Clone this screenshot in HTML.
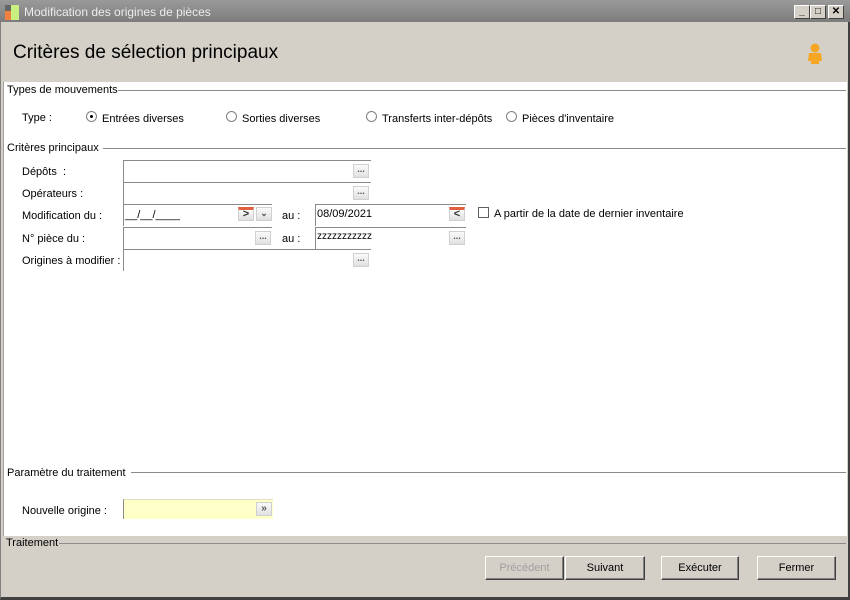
<!DOCTYPE html>
<html><head><meta charset="utf-8"><style>
*{margin:0;padding:0;box-sizing:border-box}
body{width:850px;height:600px;overflow:hidden;background:#d4d0c8;font-family:"Liberation Sans",Tahoma,sans-serif;font-size:11px;color:#000;position:relative}
.a{position:absolute}
#win{position:absolute;left:0;top:0;width:850px;height:600px;border-left:1px solid #808080;border-right:2px solid #404040;border-bottom:3px solid #404040}
#title{left:0;top:0;width:850px;height:22px;background:linear-gradient(#9a9a9a,#7c7c7c);color:#ececec;font-size:12px;line-height:24px;padding-left:24px}
.tb{top:5px;width:16px;height:14px;background:#d4d0c8;border:1px solid;border-color:#fff #404040 #404040 #fff;font-size:10px;line-height:12px;text-align:center;font-weight:bold}
#white{left:3px;top:82px;width:844px;height:454px;background:#fff;border-left:1px solid #a0a0a0}
.leg{white-space:nowrap}
.line{height:1px;background:#8c8c8c}
.fld{background:#fff;border-top:1px solid #8a8a8a;border-left:1px solid #8a8a8a;height:22px}
.dots{width:16px;height:14px;border:1px solid #d0d0d0;background:linear-gradient(#fafafa,#e0e0e0);font-size:9px;line-height:8px;text-align:center;color:#555;font-weight:bold}
.rad{width:11px;height:11px;border-radius:50%;border:1px solid #808080;background:#fff}
.btn{top:556px;height:24px;background:#d4d0c8;border:1px solid;border-color:#fff #404040 #404040 #fff;box-shadow:inset -1px -1px #808080;text-align:center;line-height:22px;font-size:11px}
</style></head><body>
<div id="win"></div>
<div class="a" id="title">Modification des origines de pièces</div>
<div class="a" style="left:5px;top:5px;width:6px;height:6px;background:#666"></div>
<div class="a" style="left:5px;top:11px;width:6px;height:9px;background:#f08040"></div>
<div class="a" style="left:11px;top:5px;width:8px;height:15px;background:#c8f080"></div>
<div class="a tb" style="left:794px">_</div>
<div class="a tb" style="left:810px">□</div>
<div class="a tb" style="left:828px">✕</div>
<div class="a" style="left:13px;top:42px;font-size:19px">Critères de sélection principaux</div>
<svg class="a" style="left:806px;top:43px" width="18" height="22"><circle cx="9" cy="5" r="4.5" fill="#f5a623"/><path d="M3 10h12l1 8h-3v3H5v-3H2z" fill="#f5a623"/></svg>
<div class="a" id="white"></div>
<div class="a leg" style="left:7px;top:84px">Types de mouvements</div>
<div class="a line" style="left:118px;top:90px;width:728px"></div>
<div class="a" style="left:22px;top:112px">Type :</div>
<div class="a rad" style="left:86px;top:111px"><div class="a" style="left:3px;top:3px;width:3px;height:3px;background:#000;border-radius:50%"></div></div>
<div class="a" style="left:102px;top:113px">Entrées diverses</div>
<div class="a rad" style="left:226px;top:111px"></div>
<div class="a" style="left:242px;top:113px">Sorties diverses</div>
<div class="a rad" style="left:366px;top:111px"></div>
<div class="a" style="left:382px;top:113px">Transferts inter-dépôts</div>
<div class="a rad" style="left:506px;top:111px"></div>
<div class="a" style="left:522px;top:113px">Pièces d'inventaire</div>
<div class="a leg" style="left:7px;top:142px">Critères principaux</div>
<div class="a line" style="left:103px;top:148px;width:743px"></div>
<div class="a" style="left:22px;top:166px">Dépôts &nbsp;:</div>
<div class="a" style="left:22px;top:188px">Opérateurs :</div>
<div class="a" style="left:22px;top:210px">Modification du :</div>
<div class="a" style="left:22px;top:233px">N° pièce du :</div>
<div class="a" style="left:22px;top:255px">Origines à modifier :</div>
<div class="a fld" style="left:123px;top:160px;width:248px"></div>
<div class="a dots" style="left:353px;top:164px">...</div>
<div class="a fld" style="left:123px;top:182px;width:248px"></div>
<div class="a dots" style="left:353px;top:186px">...</div>
<div class="a fld" style="left:123px;top:204px;width:149px"></div>
<div class="a" style="left:125px;top:209px">__/__/____</div>
<div class="a dots" style="left:238px;top:207px;border-top:3px solid #e06040;color:#333;font-size:11px;line-height:9px">&gt;</div>
<div class="a dots" style="left:256px;top:207px;font-size:9px;line-height:11px">⌄</div>
<div class="a" style="left:282px;top:210px">au :</div>
<div class="a fld" style="left:315px;top:204px;width:151px"></div>
<div class="a" style="left:317px;top:208px">08/09/2021</div>
<div class="a dots" style="left:449px;top:207px;border-top:3px solid #e06040;color:#333;font-size:11px;line-height:9px">&lt;</div>
<div class="a" style="left:478px;top:207px;width:11px;height:11px;border:1px solid #606060;background:#fff"></div>
<div class="a" style="left:494px;top:208px">A partir de la date de dernier inventaire</div>
<div class="a fld" style="left:123px;top:227px;width:149px"></div>
<div class="a dots" style="left:255px;top:231px">...</div>
<div class="a" style="left:282px;top:233px">au :</div>
<div class="a fld" style="left:315px;top:227px;width:151px"></div>
<div class="a" style="left:317px;top:231px;font-size:10px">zzzzzzzzzzz</div>
<div class="a dots" style="left:449px;top:231px">...</div>
<div class="a fld" style="left:123px;top:249px;width:248px"></div>
<div class="a dots" style="left:353px;top:253px">...</div>
<div class="a leg" style="left:7px;top:467px">Paramètre du traitement</div>
<div class="a line" style="left:131px;top:472px;width:715px"></div>
<div class="a" style="left:22px;top:505px">Nouvelle origine :</div>
<div class="a" style="left:123px;top:499px;width:150px;height:20px;background:#ffffc8;border-left:1px solid #8a8a8a;border-top:1px solid #e0e0c0"></div>
<div class="a dots" style="left:256px;top:502px;font-size:10px;line-height:11px">»</div>
<div class="a leg" style="left:6px;top:537px">Traitement</div>
<div class="a line" style="left:59px;top:543px;width:787px"></div>
<div class="a btn" style="left:485px;width:79px;color:#a0a0a0">Précédent</div>
<div class="a btn" style="left:565px;width:80px">Suivant</div>
<div class="a btn" style="left:661px;width:78px">Exécuter</div>
<div class="a btn" style="left:757px;width:79px">Fermer</div>
</body></html>
